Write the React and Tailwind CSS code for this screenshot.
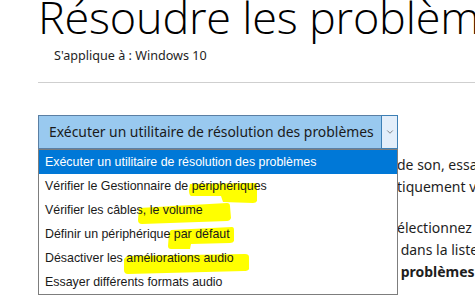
import { ChevronDown } from 'lucide-react'

const OPTIONS = [
  'Exécuter un utilitaire de résolution des problèmes',
  'Vérifier le Gestionnaire de périphériques',
  'Vérifier les câbles, le volume',
  'Définir un périphérique par défaut',
  'Désactiver les améliorations audio',
  'Essayer différents formats audio',
]

// body copy that runs behind the open list; only the tail of each line shows
const LINES = [
  { text: 'de son, essayez les suggestions suivantes.', gap: false },
  { text: 'tiquement vos problèmes.', gap: false },
  { text: 'électionnez', gap: true },
  { text: ' dans la liste des résultats.', gap: false },
  { text: ' problèmes', gap: false, bold: true },
]

function Highlights() {
  return (
    <svg className="absolute left-0 top-0" width="360" height="147" viewBox="0 0 360 147">
      <path d="M151 34 L216 33 Q218 33 218 36 L218 51 Q217 53 214 53 L184 52 L182 46 L152 46 Q150 45 150 40 Z" fill="#ffff00" />
      <path d="M100 58 L188 53 Q191 53 191 56 L192 68 Q191 71 188 71 L103 74 Q99 74 99 70 Z" fill="#ffff00" />
      <path d="M132 80 L193 77 Q195 77 195 80 L195 91 Q194 93 191 93 L152 94 L151 99 L132 99 Q129 99 129 96 L130 83 Z" fill="#ffff00" />
      <path d="M88 106 L206 104 Q210 104 210 107 L210 119 Q209 121 205 121 L89 124 Q85 124 85 120 L85 109 Z" fill="#ffff00" />
    </svg>
  )
}

function App() {
  return (
    <div className="relative h-[298px] w-[475px] overflow-hidden bg-white text-black">
      <div className="pl-[38px]">
        <h1 className="-mt-[10px] whitespace-nowrap font-['Open_Sans',sans-serif] text-[45px] font-light leading-[54px] tracking-[-0.2px]">
          Résoudre les problèmes de son dans Windows 10
        </h1>
        <p className="mt-[3px] pl-[16px] font-['Noto_Sans',sans-serif] text-[12.6px] leading-[18px] text-[#1e1e1e]">
          S'applique à : Windows 10
        </p>
        <div className="mt-[17px] h-px bg-[#cfcfcf]" />

        <div className="relative mt-[32px] w-[360px]">
          <div className="flex h-[34px] border border-[#5b7fa3] bg-[#99c9ef]">
            <span className="flex-1 truncate pl-[10px] font-['Noto_Sans',sans-serif] text-[13.9px] leading-[32px] text-[#1a1a1a]">
              Exécuter un utilitaire de résolution des problèmes
            </span>
            <span className="-my-px -mr-px flex w-[17px] items-center justify-center border border-[#3d7fb5] bg-[#e3eefa]">
              <ChevronDown size={10} strokeWidth={1.5} className="text-[#444]" />
            </span>
          </div>

          <ul className="absolute left-0 top-full z-20 w-[360px] border border-[#7d7d7d] bg-white font-['Liberation_Sans',sans-serif] text-[12.4px]">
            <Highlights />
            {OPTIONS.map((option, index) => (
              <li
                key={option}
                className={
                  index === 0
                    ? 'relative h-[24px] bg-[#0078d7] pl-[6px] leading-[25px] text-white'
                    : 'relative h-[24px] pl-[6px] leading-[25px] text-[#1a1a1a]'
                }
              >
                {option}
              </li>
            ))}
          </ul>
        </div>

        <div className="mt-[5px] pl-[359px] font-['Noto_Sans',sans-serif] text-[14px] leading-[22px] text-[#1e1e1e]">
          {LINES.map((line) => (
            <div key={line.text} className={line.gap ? 'mt-[19px] whitespace-pre' : 'whitespace-pre'}>
              <span className={line.bold ? 'font-bold' : ''}>{line.text}</span>
            </div>
          ))}
        </div>
      </div>
    </div>
  )
}

export default App
